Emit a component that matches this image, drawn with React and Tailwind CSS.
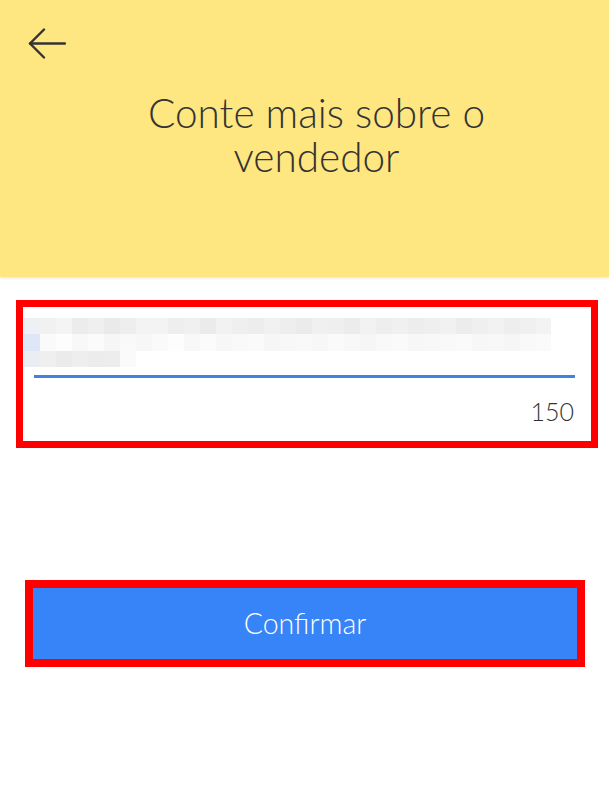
import React from "react";

const row1 = ["#edf0f5","#f1f1f1","#f4f4f4","#ececec","#efefef","#eaeaea","#eeeeee","#f3f3f3","#f3f3f3","#eeeeee","#f0f0f0","#ebebeb","#f2f2f2","#efefef","#ededed","#f1f1f1","#eeeeee","#ebebeb","#f0f0f0","#efefef","#ececec","#f2f2f2","#eeeeee","#f0f0f0","#ededed","#efefef","#f1f1f1","#ececec","#efefef","#f2f2f2","#eeeeee","#f0f0f0","#f3f3f3"];
const row2 = ["#dde7f7","#fafafa","#fdfdfd","#f8f8f8","#fbfbfb","#f6f6f6","#f9f9f9","#f7f7f7","#fafafa","#fdfdfd","#f8f8f8","#fbfbfb","#f7f7f7","#f9f9f9","#fafafa","#f6f6f6","#f8f8f8","#f9f9f9","#f7f7f7","#fafafa","#f8f8f8","#f6f6f6","#f9f9f9","#fafafa","#f7f7f7","#f8f8f8","#f9f9f9","#fafafa","#f7f7f7","#f8f8f8","#f6f6f6","#f9f9f9","#fafafa"];
const row3 = ["#eaeef3","#efefef","#ebebeb","#eeeeee","#ececec","#ededed","#fafafa"];

function Row({ colors }) {
  return (
    <div className="flex h-full">
      {colors.map((c, i) => (
        <div key={i} className="w-[16px] h-full shrink-0" style={{ backgroundColor: c }} />
      ))}
    </div>
  );
}

export default function App() {
  return (
    <div className="w-[609px] h-[812px] bg-white overflow-hidden" style={{ fontFamily: "Lato, 'Open Sans', sans-serif" }}>
      <header className="h-[277px] bg-[#fee680] shadow-[0_1px_3px_rgba(0,0,0,0.12)] relative flex flex-col">
        <div className="pt-[28px] pl-[28px]">
          <svg width="38" height="31" viewBox="0 0 38 31" fill="none" stroke="#333" strokeWidth="2.4" strokeLinecap="round" strokeLinejoin="round">
            <path d="M37 15.5H2" />
            <path d="M16 1.5L2 15.5L16 29.5" />
          </svg>
        </div>
        <h1 className="mt-[32px] pl-[24px] flex flex-col items-center text-[40.5px] leading-[44px] font-light text-[#333333]">
          <span>Conte mais sobre o</span>
          <span>vendedor</span>
        </h1>
      </header>

      <div className="mt-[23px] ml-[16px] mr-[11px] border-[7px] border-[#ff0000] h-[148px] pl-[1px] pt-[11px] flex flex-col">
        <div className="flex flex-col">
          <div className="h-[16px] w-[527px] overflow-hidden"><Row colors={row1} /></div>
          <div className="h-[17px] w-[527px] overflow-hidden"><Row colors={row2} /></div>
          <div className="h-[16px] w-[112px] overflow-hidden"><Row colors={row3} /></div>
        </div>
        <div className="mt-[8px] ml-[10px] mr-[16px] h-[3px] bg-[#3f82e2]" />
        <div className="mt-[19px] mr-[17px] text-right text-[25px] leading-[28px] font-light text-[#333333]">150</div>
      </div>

      <div className="mt-[132px] ml-[25px] w-[560px] border-[8px] border-[#ff0000] h-[87px]">
        <button className="w-full h-full bg-[#3784f8] text-white text-[28.5px] font-light flex items-center justify-center">
          Confirmar
        </button>
      </div>
    </div>
  );
}
